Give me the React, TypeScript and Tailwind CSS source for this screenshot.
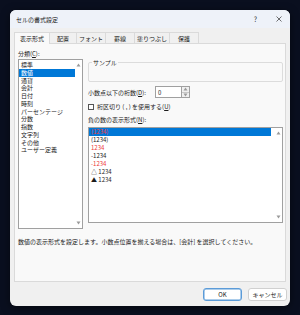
const FONT = { fontFamily: '"Noto Sans CJK JP", "Noto Sans", sans-serif' }

const TABS = ['表示形式', '配置', 'フォント', '罫線', '塗りつぶし', '保護']
const TAB_W = ['w-[36px]', 'w-[27px]', 'w-[29px]', 'w-[29px]', 'w-[35px]', 'w-[29px]']

const CATEGORIES = ['標準', '数値', '通貨', '会計', '日付', '時刻', 'パーセンテージ', '分数', '指数', '文字列', 'その他', 'ユーザー定義']

const NEGATIVES = [
  { text: '(1234)', red: true },
  { text: '(1234)', red: false },
  { text: '1234', red: true },
  { text: '-1234', red: false },
  { text: '-1234', red: true },
  { text: '△ 1234', red: false },
  { text: '▲ 1234', red: false },
]

function Arrow({ up }: { up: boolean }) {
  return (
    <svg width="5" height="4" viewBox="0 0 5 4" className="block">
      <path d={up ? 'M0.5 3.5 L2.5 0.5 L4.5 3.5 Z' : 'M0.5 0.5 L2.5 3.5 L4.5 0.5 Z'} fill="#9a9a9a" />
    </svg>
  )
}

function ScrollCol() {
  return (
    <div className="w-[7px] flex flex-col items-center justify-between py-[3px]">
      <Arrow up />
      <Arrow up={false} />
    </div>
  )
}

export default function App() {
  return (
    <div className="w-[300px] h-[315px] bg-[#0a0f1f] pt-[10px] pl-[10px]" style={FONT}>
      <div className="w-[280px] h-[296px] rounded-[6px] bg-[#f0f0f0] flex flex-col overflow-hidden text-[6px] text-[#1b1b1b] shadow-[0_2px_8px_rgba(0,0,0,0.5)]">
        {/* title bar */}
        <div className="h-[18px] bg-[#eef2f9] flex items-center pl-[6px] pr-[8px]">
          <span className="flex-1 text-[6px]">セルの書式設定</span>
          <span className="text-[7px] text-[#333] mr-[19px]">?</span>
          <svg width="6" height="6" viewBox="0 0 6 6">
            <path d="M0.5 0.5 L5.5 5.5 M5.5 0.5 L0.5 5.5" stroke="#333" strokeWidth="0.7" />
          </svg>
        </div>

        {/* tabs */}
        <div className="flex ml-[4px] mt-[4px] h-[11px]">
          {TABS.map((t, i) => (
            <div
              key={t}
              className={`${TAB_W[i]} h-[11px] flex items-center justify-center border-t border-r border-[#dadada] ${
                i === 0 ? 'bg-[#f9f9f9] border-l relative z-10 -mb-px h-[12px]' : 'bg-[#f0f0f0]'
              }`}
            >
              {t}
            </div>
          ))}
        </div>

        {/* panel */}
        <div className="mx-[4px] h-[239px] border border-[#dadada] bg-[#f9f9f9] pl-[3px] pr-[2px] pt-[5px]">
          <div className="flex gap-[5px]">
            {/* left */}
            <div className="w-[65px] flex flex-col">
              <div className="h-[9px] leading-[9px]">
                分類(<span className="underline">C</span>):
              </div>
              <div className="mt-[1px] h-[170px] border border-[#a0a0a0] bg-white flex">
                <div className="flex-1 pt-[1px]">
                  {CATEGORIES.map((c, i) => (
                    <div
                      key={c}
                      className={`h-[7.75px] leading-[7.75px] pl-[2px] ${i === 1 ? 'bg-[#0078d7] text-white' : ''}`}
                    >
                      {c}
                    </div>
                  ))}
                </div>
                <ScrollCol />
              </div>
            </div>

            {/* right */}
            <div className="w-[195px] flex flex-col">
              <fieldset className="mt-[9px] h-[24px] border border-[#dcdcdc] rounded-[2px] px-[3px]">
                <legend className="px-[1px] h-[9px] leading-[9px]">サンプル</legend>
              </fieldset>

              <div className="mt-[4px] h-[12px] flex items-center">
                <span className="w-[67px]">
                  小数点以下の桁数(<span className="underline">D</span>):
                </span>
                <div className="w-[27px] h-[12px] border border-[#a0a0a0] bg-white flex items-center pl-[2px]">0</div>
                <div className="w-[8px] h-[12px] border border-l-0 border-[#a0a0a0] bg-[#f0f0f0] flex flex-col">
                  <div className="flex-1 flex items-center justify-center border-b border-[#c8c8c8]">
                    <Arrow up />
                  </div>
                  <div className="flex-1 flex items-center justify-center">
                    <Arrow up={false} />
                  </div>
                </div>
              </div>

              <div className="mt-[4px] h-[9px] flex items-center">
                <div className="w-[6px] h-[6px] border border-[#555] bg-white mr-[3px]" />
                <span>
                  桁区切り ( , ) を使用する(<span className="underline">U</span>)
                </span>
              </div>

              <div className="mt-[4px] h-[9px] leading-[9px]">
                負の数の表示形式(<span className="underline">N</span>):
              </div>

              <div className="mt-[3px] h-[96px] border border-[#a0a0a0] bg-white flex">
                <div className="flex-1 pr-[4px]">
                  {NEGATIVES.map((n, i) => (
                    <div
                      key={i}
                      className={`h-[8px] leading-[8px] pl-[2px] ${i === 0 ? 'bg-[#0078d7]' : ''} ${
                        n.red ? 'text-[#ee3a3a]' : ''
                      }`}
                    >
                      {n.text}
                    </div>
                  ))}
                </div>
                <ScrollCol />
              </div>
            </div>
          </div>

          <div className="mt-[8px] h-[9px] leading-[9px] whitespace-nowrap">
            数値の表示形式を設定します。小数点位置を揃える場合は、[会計] を選択してください。
          </div>
        </div>

        {/* footer */}
        <div className="flex justify-end gap-[6px] pt-[6px] pr-[3px]">
          <button className="w-[39px] h-[13px] rounded-[3px] border border-[#5b9bd8] bg-white text-[6px] text-[#1b1b1b] flex items-center justify-center shadow-[inset_0_0_0_0.5px_#5b9bd8]">
            OK
          </button>
          <button className="w-[39px] h-[13px] rounded-[3px] border border-[#d0d0d0] bg-white text-[6px] text-[#1b1b1b] flex items-center justify-center">
            キャンセル
          </button>
        </div>
      </div>
    </div>
  )
}
